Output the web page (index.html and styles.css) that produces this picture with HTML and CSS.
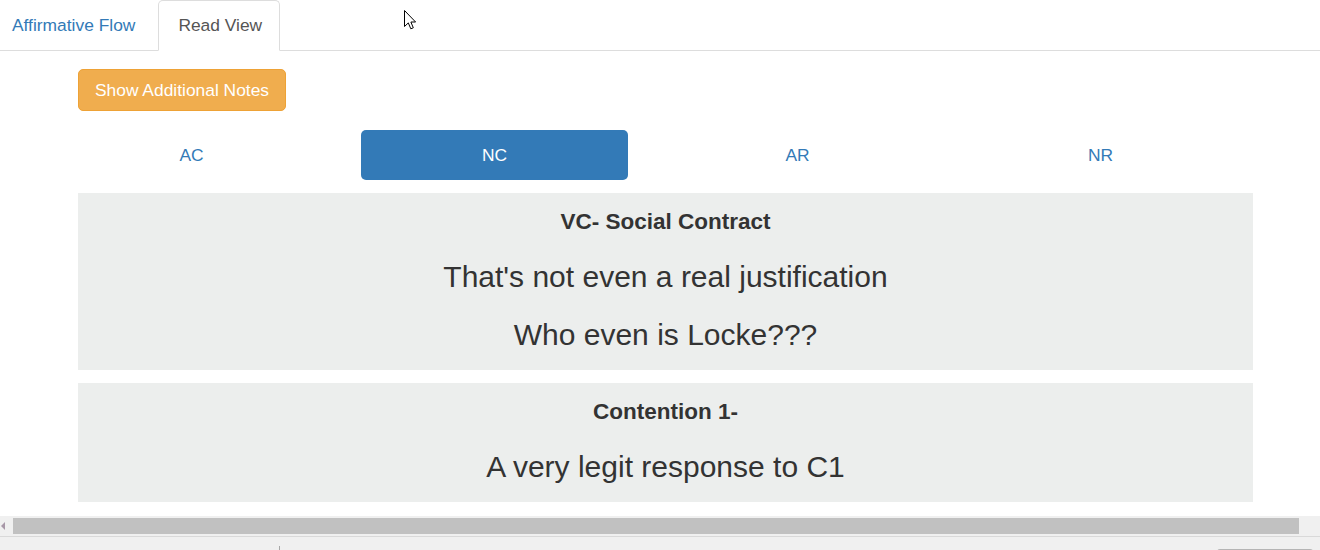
FILE: index.html
```html
<!DOCTYPE html>
<html>
<head>
<meta charset="utf-8">
<title>Read View</title>
<link rel="stylesheet" href="styles.css">
</head>
<body>
<div class="tabs">
  <a class="tab tab-first">Affirmative Flow</a>
  <a class="tab tab-active">Read View</a>
</div>
<main class="content">
  <button class="btn-warning">Show Additional Notes</button>
  <nav class="pills">
    <div class="pill-cell"><a class="pill">AC</a></div>
    <div class="pill-cell"><a class="pill pill-active">NC</a></div>
    <div class="pill-cell"><a class="pill">AR</a></div>
    <div class="pill-cell"><a class="pill">NR</a></div>
  </nav>
  <section class="card">
    <h4 class="card-title">VC- Social Contract</h4>
    <p class="card-text">That's not even a real justification</p>
    <p class="card-text">Who even is Locke???</p>
  </section>
  <section class="card">
    <h4 class="card-title">Contention 1-</h4>
    <p class="card-text">A very legit response to C1</p>
  </section>
</main>
<div class="hscroll">
  <span class="hscroll-arrow"></span>
  <span class="hscroll-thumb"></span>
</div>
<div class="statusbar">
  <span class="status-tick"></span>
  <span class="status-button"></span>
</div>
<svg class="cursor" width="13" height="21" viewBox="0 0 13 21">
  <path d="M0.5 0.5 L0.5 16.5 L4.3 12.9 L6.8 18.8 L9.3 17.8 L6.9 12 L11.6 12 Z" fill="#fff" stroke="#000" stroke-width="1" stroke-linejoin="miter"/>
</svg>
</body>
</html>
```
FILE: styles.css
```css
* { box-sizing: border-box; }
html, body { margin: 0; padding: 0; }
body {
  width: 1320px;
  height: 550px;
  overflow: hidden;
  background: #fff;
  color: #333;
  font-family: "Liberation Sans", Arial, sans-serif;
  position: relative;
}

.tabs {
  display: flex;
  height: 51px;
  border-bottom: 1px solid #ddd;
}
.tab {
  display: flex;
  align-items: center;
  height: 51px;
  margin-bottom: -1px;
  padding: 0 17px 0 19px;
  font-size: 17.4px;
  color: #337ab7;
  border: 1px solid transparent;
  border-radius: 5px 5px 0 0;
  margin-right: 2px;
}
.tab-first {
  padding: 0 20px 0 11px;
}
.tab-active {
  color: #555;
  background: #fff;
  border-color: #ddd #ddd #fff #ddd;
}

.content {
  padding-left: 78px;
  width: 1253px;
}
.btn-warning {
  display: block;
  margin-top: 18px;
  height: 42px;
  padding: 0 16px;
  font-family: "Liberation Sans", Arial, sans-serif;
  font-size: 17.4px;
  line-height: 40px;
  color: #fff;
  background: #f0ad4e;
  border: 1px solid #eea236;
  border-radius: 5px;
}

.pills {
  display: grid;
  grid-template-columns: repeat(4, 303px);
  margin: 19px 0 0 -38px;
  width: 1212px;
}
.pill-cell { padding: 0 18px; }
.pill {
  display: block;
  height: 50px;
  line-height: 50px;
  text-align: center;
  font-size: 17.4px;
  color: #337ab7;
  border-radius: 5px;
}
.pill-active {
  background: #337ab7;
  color: #fff;
}

.card {
  margin-top: 13px;
  background: #eceeed;
  text-align: center;
  padding: 11px 0 18px;
}
.card-title {
  margin: 0;
  font-size: 22.5px;
  line-height: 36px;
  font-weight: bold;
}
.card-text {
  margin: 20px 0 0;
  font-size: 30px;
  line-height: 34px;
}
.card-text + .card-text { margin-top: 24px; }

.hscroll {
  display: flex;
  align-items: center;
  margin-top: 14px;
  height: 20px;
  background: #f0f0f0;
}
.hscroll-arrow {
  width: 0;
  height: 0;
  margin-left: 1px;
  border-top: 4px solid transparent;
  border-bottom: 4px solid transparent;
  border-right: 4px solid #a898a8;
}
.hscroll-thumb {
  margin-left: 8px;
  width: 1286px;
  height: 16px;
  background: #c1c1c1;
}

.statusbar {
  display: flex;
  height: 15px;
  border-top: 1px solid #d9d9d9;
  background: #f0f0f0;
}
.status-tick {
  margin: 9px 0 0 279px;
  width: 1px;
  height: 6px;
  background: #a8a8a8;
}
.status-button {
  margin: 12px 7px 0 auto;
  width: 96px;
  height: 10px;
  border: 1px solid #b5b5b5;
  border-bottom: none;
  border-radius: 3px 3px 0 0;
  background: #fbfbfb;
}

.cursor {
  position: absolute;
  left: 404px;
  top: 10px;
}
```
